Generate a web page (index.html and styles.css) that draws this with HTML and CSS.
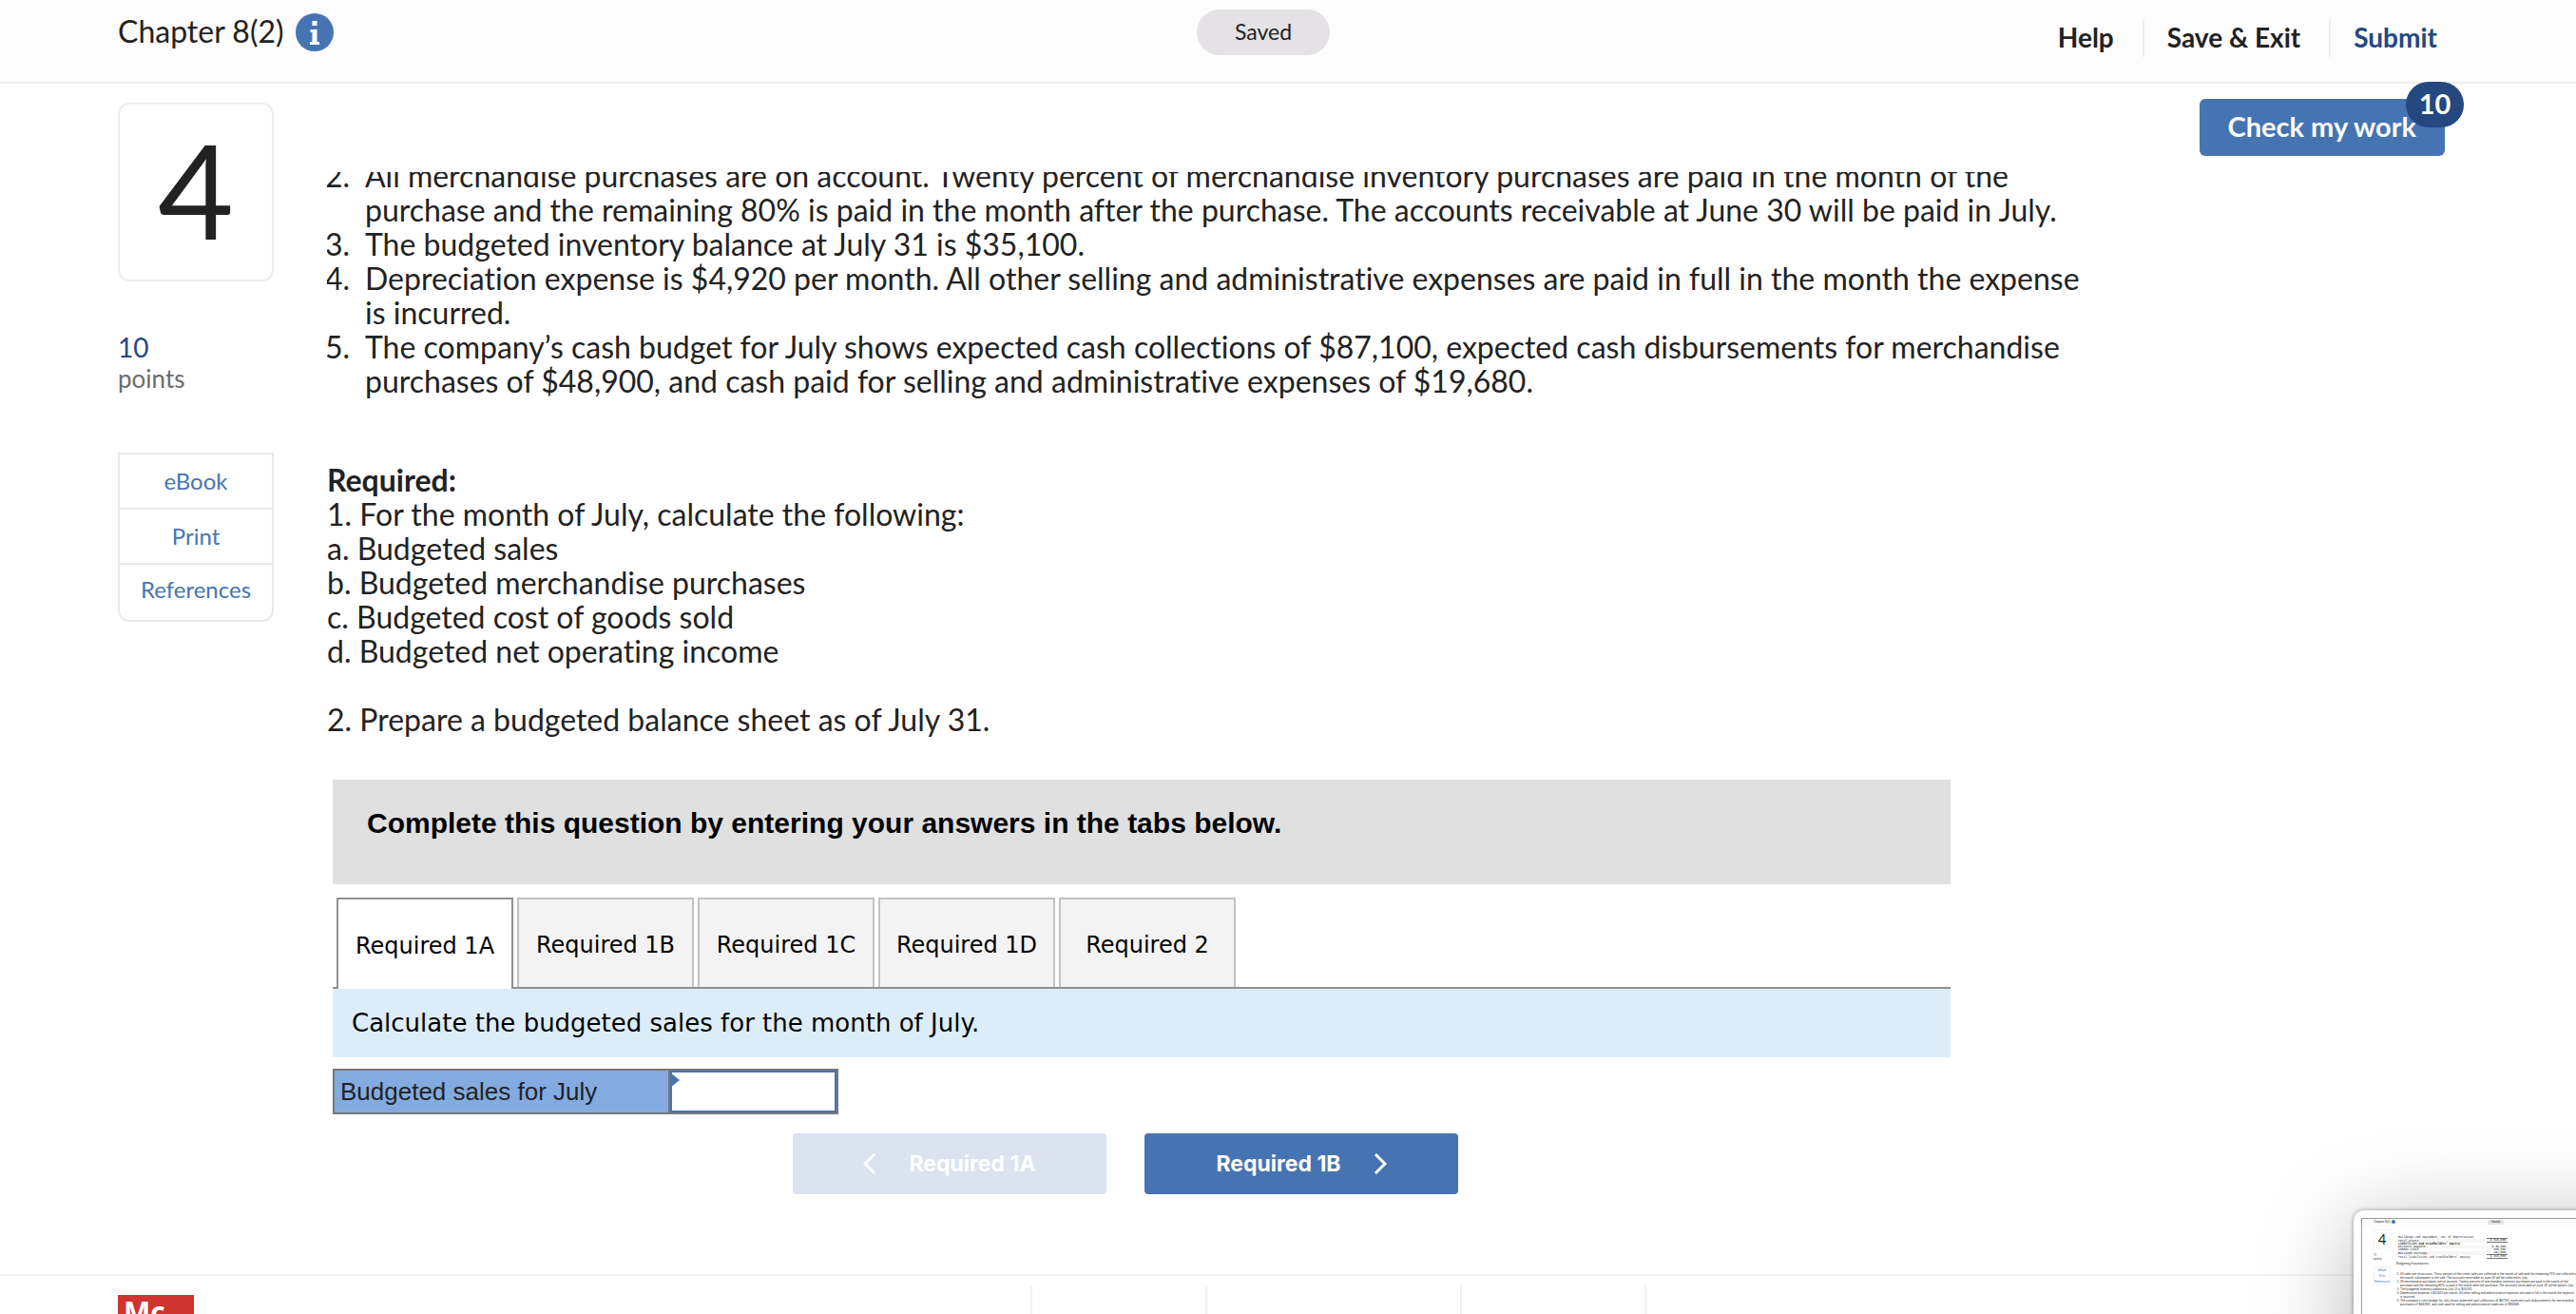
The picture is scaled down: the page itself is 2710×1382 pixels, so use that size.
FILE: index.html
```html
<!DOCTYPE html>
<html lang="en">
<head>
<meta charset="UTF-8">
<meta name="viewport" content="width=device-width, initial-scale=1.0">
<title>Chapter 8(2)</title>

<link rel="stylesheet" href="styles.css">
</head>

<body>

<header class="topbar">
<div class="title">
<h1>Chapter 8(2)</h1>
<button class="info" aria-label="Assignment info">
<svg width="40" height="40" viewBox="0 0 40 40">
<circle cx="20" cy="20" r="20" fill="#4674b2"/>
<path d="M17.500 8h5v5h-5zM15.500 17h7v13h2.500v3h-10v-3h2.500v-10h-2z" fill="#fff"/>
</svg>
</button>
</div>
<span class="saved">Saved</span>
<nav class="actions">
<a href="#">Help</a>
<a href="#">Save &amp; Exit</a>
<a href="#" class="submit">Submit</a>
</nav>
</header>

<div class="page">

<aside class="side">
<div class="number">4</div>
<div class="points"><b>10</b>points</div>
<nav class="tools">
<a href="#">eBook</a>
<a href="#">Print</a>
<a href="#">References</a>
</nav>
</aside>

<main class="content">

<div class="question">
<ol class="assumptions" start="2">
<li>All merchandise purchases are on account. Twenty percent of merchandise inventory purchases are paid in the month of the<br>purchase and the remaining 80% is paid in the month after the purchase. The accounts receivable at June 30 will be paid in July.</li>
<li>The budgeted inventory balance at July 31 is $35,100.</li>
<li>Depreciation expense is $4,920 per month. All other selling and administrative expenses are paid in full in the month the expense<br>is incurred.</li>
<li>The company’s cash budget for July shows expected cash collections of $87,100, expected cash disbursements for merchandise<br>purchases of $48,900, and cash paid for selling and administrative expenses of $19,680.</li>
</ol>

<p class="required"><b>Required:</b><br>
1. For the month of July, calculate the following:<br>
a. Budgeted sales<br>
b. Budgeted merchandise purchases<br>
c. Budgeted cost of goods sold<br>
d. Budgeted net operating income<br>
<br>
2. Prepare a budgeted balance sheet as of July 31.</p>
</div>

<section class="answer">
<h2>Complete this question by entering your answers in the tabs below.</h2>

<div class="tabs" role="tablist">
<button class="tab active" role="tab" aria-selected="true">Required 1A</button>
<button class="tab" role="tab">Required 1B</button>
<button class="tab" role="tab">Required 1C</button>
<button class="tab" role="tab">Required 1D</button>
<button class="tab" role="tab">Required 2</button>
</div>

<p class="prompt">Calculate the budgeted sales for the month of July.</p>

<table class="sheet">
<tr>
<th scope="row"><label for="sales">Budgeted sales for July</label></th>
<td><input type="text" id="sales"></td>
</tr>
</table>

<div class="pager">
<button disabled>
<svg width="14" height="22" viewBox="0 0 14 22"><path d="M12 1L2 11l10 10"/></svg>
Required 1A
</button>
<button>
Required 1B
<svg width="14" height="22" viewBox="0 0 14 22"><path d="M2 1l10 10L2 21"/></svg>
</button>
</div>
</section>

</main>

<button class="check">Check my work<span class="badge">10</span></button>

</div>

<footer class="footer">
<div class="logo">Mc</div>
<div class="cell"></div>
<div class="cell"></div>
<div class="cell"></div>
<div class="cell"></div>
</footer>

<!-- floating preview -->
<div class="preview">
<div class="screen">
<div class="p-bar"><span>Chapter 8(2)</span><i></i><em>Saved</em></div>
<div class="p-body">
<div class="p-side">
<div class="p-number">4</div>
<div class="p-points"><b>10</b>points</div>
<div class="p-tools"><span>eBook</span><span>Print</span><span>References</span></div>
</div>
<div class="p-text">
<table class="p-table">
<tr><td>Buildings and equipment, net of depreciation</td><td class="sum"></td></tr>
<tr class="alt"><td>Total assets</td><td class="sum">$ 626,000</td></tr>
<tr><th colspan="2">Liabilities and Stockholders' Equity</th></tr>
<tr class="alt"><td>Accounts payable</td><td>$ 36,000</td></tr>
<tr><td>Common stock</td><td>300,000</td></tr>
<tr class="alt"><td>Retained earnings</td><td class="sum">292,000</td></tr>
<tr><td>Total liabilities and stockholders' equity</td><td class="sum">$ 626,000</td></tr>
</table>
<p>Budgeting Assumptions:</p>
<ol>
<li>All sales are on account. Thirty percent of the credit sales are collected in the month of sale and the remaining 70% are collected in<br>the month subsequent to the sale. The accounts receivable at June 30 will be collected in July.</li>
<li>All merchandise purchases are on account. Twenty percent of merchandise inventory purchases are paid in the month of the<br>purchase and the remaining 80% is paid in the month after the purchase. The accounts receivable at June 30 will be paid in July.</li>
<li>The budgeted inventory balance at July 31 is $35,100.</li>
<li>Depreciation expense is $4,920 per month. All other selling and administrative expenses are paid in full in the month the expense<br>is incurred.</li>
<li>The company’s cash budget for July shows expected cash collections of $87,100, expected cash disbursements for merchandise<br>purchases of $48,900, and cash paid for selling and administrative expenses of $19,680.</li>
</ol>
</div>
</div>
</div>
</div>

</body>
</html>
```
FILE: styles.css
```css
*{box-sizing:border-box;}

body{
    position:relative;
    margin:0;
    min-height:100vh;
    display:flex;
    flex-direction:column;
    overflow:hidden;
    background:white;
    color:#222;
    font-family:Lato, "Open Sans", sans-serif;
    font-size:32px;
    font-variant-ligatures:none;
    line-height:36px;
}

a{text-decoration:none;color:inherit;}
p,h1,h2{margin:0;}

button{
    border:none;
    font-family:inherit;
    color:inherit;
}

.topbar{
    display:grid;
    grid-template-columns:1fr auto 1fr;
    align-items:start;
    height:88px;
    padding:0 176px 0 124px;
    background:#fcfcfc;
    border-bottom:2px solid #eee;
}

.title{
    display:flex;
    gap:12px;
    padding-top:14px;
}
.title h1{
    font-size:32px;
    font-weight:400;
    line-height:38px;
}
.info{
    padding:0;
    height:40px;
    background:none;
}

.saved{
    margin-top:10px;
    padding:0 40px;
    border-radius:24px;
    background:#e4e2e4;
    font-size:23px;
    line-height:46px;
    height:48px;
}

.actions{
    display:flex;
    justify-content:flex-end;
    margin-right:-60px;
    padding-top:20px;
    font-size:28px;
    font-weight:700;
    line-height:38px;
}
.actions a{
    height:40px;
    padding:0 30px 0 24px;
}
.actions a + a{border-left:2px solid #eee;}
.submit{color:#24487f;}

.page{
    flex:1 0 auto;
    display:flex;
    align-items:flex-start;
    padding:0 138px 0 124px;
}

.side{
    width:164px;
    margin-top:20px;
    flex:none;
}
.number{
    height:188px;
    border:2px solid #eee;
    border-radius:12px;
    font-size:138px;
    line-height:178px;
    text-align:center;
}
.points{
    margin-top:52px;
    font-size:26px;
    line-height:32px;
    color:#6b6b6b;
}
.points b{
    display:block;
    font-size:28px;
    font-weight:400;
    line-height:34px;
    color:#24487f;
}
.tools{
    display:flex;
    flex-direction:column;
    margin-top:62px;
    border:2px solid #e9e9e9;
    border-radius:0 0 12px 12px;
    font-size:24px;
    line-height:56px;
    text-align:center;
    color:#4674b2;
}
.tools a + a{border-top:2px solid #e9e9e9;}
.tools a:last-child{
    padding-bottom:6px;
    line-height:52px;
}

.content{
    flex:1;
    margin:93px 0 0 56px;
}

.question{overflow:hidden;}

/* list is scrolled a little under the header */
.assumptions{
    margin:-14px 0 68px;
    padding-left:40px;
}
.assumptions li::marker{content:counter(list-item) ".\2002";}

.answer{
    max-width:1702px;
    margin:45px 0 0 6px;
}
.answer h2{
    height:110px;
    padding:28px 36px;
    background:#e0e0e0;
    color:black;
    font-family:"Liberation Sans", Arial, sans-serif;
    font-size:30px;
}

.tabs{
    display:flex;
    gap:4px;
    margin-top:14px;
    padding:0 4px;
    border-bottom:2px solid #919191;
}
.tab{
    width:186px;
    height:94px;
    padding:4px 0 0;
    border:2px solid #c2c2c2;
    border-bottom:none;
    background:#f3f3f3;
    color:black;
    font-family:"DejaVu Sans", Verdana, sans-serif;
    font-size:24px;
}
.tab.active{
    height:96px;
    margin-bottom:-2px;
    border-color:#919191;
    background:white;
}

.prompt{
    padding:18px 20px;
    background:#dcecf9;
    color:black;
    font-family:"DejaVu Sans", Verdana, sans-serif;
    font-size:26px;
}

.sheet{
    margin-top:12px;
    border:2px solid #777;
    border-spacing:0;
    font-family:"Liberation Sans", Arial, sans-serif;
    font-size:26px;
}
.sheet th{
    width:351px;
    padding:0 6px;
    background:#83abe0;
    font-weight:400;
    text-align:left;
}
.sheet td{
    position:relative;
    padding:0;
    border-left:2px solid #777;
}
.sheet td::before{
    content:"";
    position:absolute;
    left:0;
    top:2px;
    border-left:10px solid #4674b2;
    border-top:8px solid transparent;
    border-bottom:8px solid transparent;
}
.sheet input{
    display:block;
    width:175px;
    height:44px;
    border:2px solid #4674b2;
    border-radius:0;
    font:inherit;
}

.pager{
    display:flex;
    gap:40px;
    margin-top:20px;
    padding-left:484px;
}
.pager button{
    display:flex;
    align-items:center;
    justify-content:center;
    gap:34px;
    width:330px;
    height:64px;
    border-radius:4px;
    background:#4674b2;
    color:white;
    font-family:Inter, sans-serif;
    font-size:23px;
    font-weight:700;
}
.pager button:disabled{background:#dae3ef;}
.pager path{
    fill:none;
    stroke:white;
    stroke-width:3;
}

.check{
    position:relative;
    height:60px;
    margin-top:16px;
    padding:0 30px 4px;
    border-radius:6px;
    background:#4674b2;
    color:white;
    font-size:29px;
    font-weight:700;
}
.badge{
    position:absolute;
    top:-18px;
    right:-20px;
    width:61px;
    height:48px;
    border-radius:24px;
    background:#24487f;
    line-height:46px;
}

.footer{
    display:flex;
    height:42px;
    padding-left:124px;
    border-top:2px solid #f2f2f2;
    overflow:hidden;
}
.logo{
    width:80px;
    height:80px;
    margin:20px 880px 0 0;
    padding-left:6px;
    background:#cf3430;
    color:white;
    font-family:"Open Sans", sans-serif;
    font-size:30px;
    font-weight:700;
    line-height:36px;
}
.cell{
    width:184px;
    margin-top:10px;
    border-left:2px solid #f2f2f2;
}
.cell:nth-child(3){width:268px;}
.cell:nth-child(4){width:194px;}

/* hangs out of the bottom right corner */
.preview{
    position:absolute;
    right:-246px;
    bottom:-191px;
    width:480px;
    height:300px;
    padding:8px;
    border-radius:10px;
    background:white;
    box-shadow:0 0 4px rgba(0,0,0,.4), 0 20px 100px rgba(0,0,0,.3);
    overflow:hidden;
    font-family:Inter, sans-serif;
    font-size:3px;
    line-height:4px;
}
.screen{
    height:284px;
    border:1px solid #999;
}
.p-bar{
    display:flex;
    align-items:center;
    gap:1px;
    height:9px;
    padding:0 12px 3px;
    background:#fcfcfc;
}
.p-bar i{
    width:4px;
    height:4px;
    border-radius:50%;
    background:#4674b2;
}
.p-bar em{
    margin-left:96px;
    padding:0 4px;
    border-radius:3px;
    background:#e4e2e4;
    font-style:normal;
    line-height:5px;
}
.p-body{
    display:flex;
    padding:2px 12px;
}
.p-side{
    width:18px;
    margin-right:6px;
}
.p-number{
    height:20px;
    border:1px solid #f4f4f4;
    font-family:Lato, sans-serif;
    font-size:15px;
    line-height:18px;
    text-align:center;
}
.p-points{margin-top:5px;}
.p-points b{
    display:block;
    font-weight:400;
    color:#4674b2;
}
.p-tools{
    margin-top:6px;
    border:1px solid #f4f4f4;
    color:#4674b2;
    text-align:center;
}
.p-tools span{display:block;line-height:6px;}
.p-text{white-space:nowrap;}
.p-table{
    width:117px;
    margin-top:7px;
    border-spacing:0;
    font-family:"Liberation Mono", monospace;
    font-size:3px;
    line-height:3px;
    text-align:left;
}
.p-table td,.p-table th{padding:0 2px;}
.p-table td + td{
    width:22px;
    text-align:right;
}
.p-table .alt{background:#f6f6f6;}
.p-table .sum{border-bottom:1px solid #777;}
.p-text p{margin-top:3px;}
.p-text ol{
    margin:7px 0 0;
    padding-left:4px;
}
```
